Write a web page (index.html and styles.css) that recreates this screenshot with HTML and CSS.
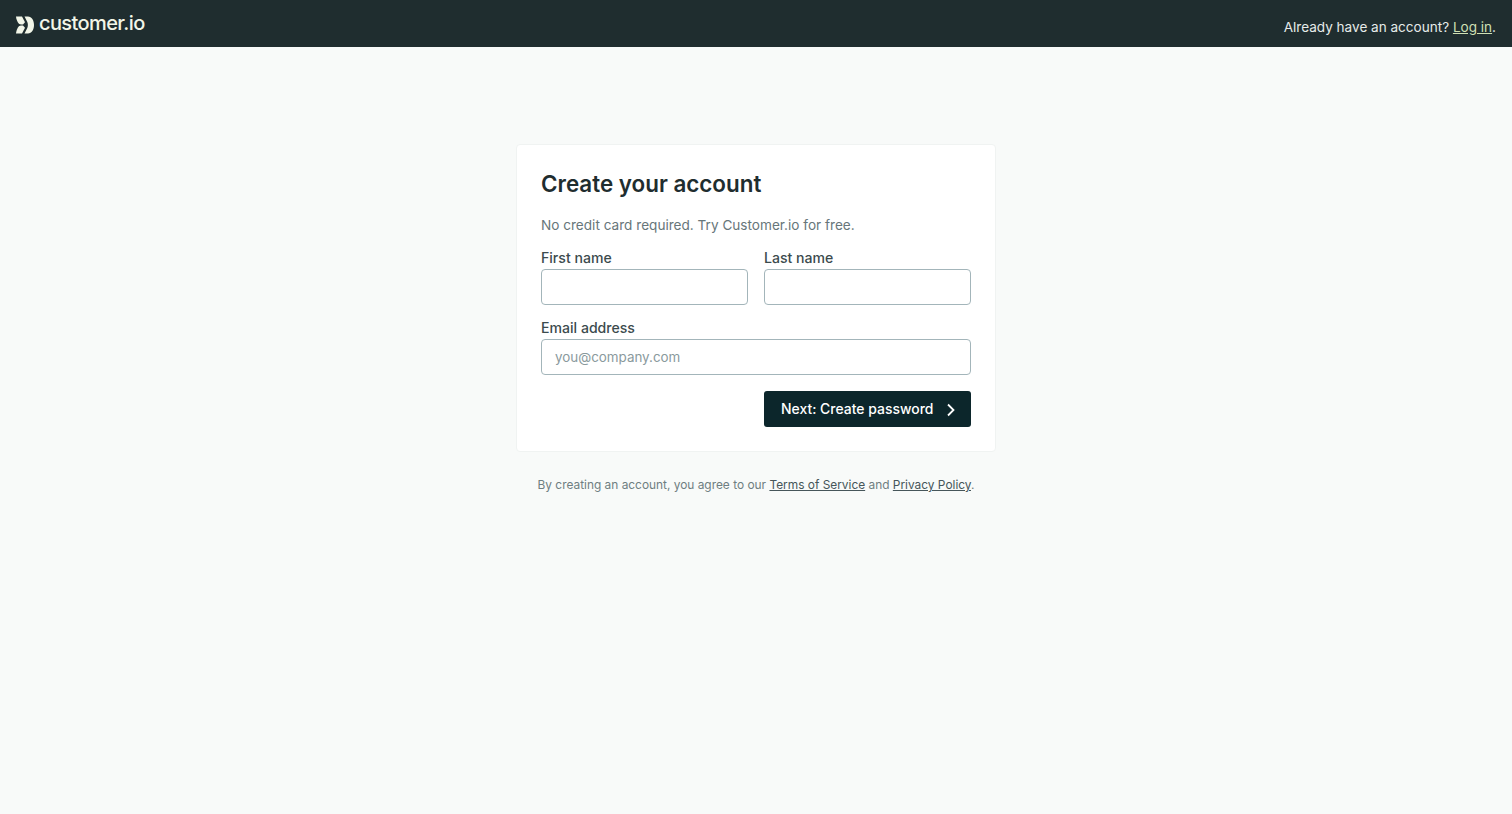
FILE: index.html
```html
<!DOCTYPE html>
<html lang="en">
<head>
  <meta charset="UTF-8">
  <meta name="viewport" content="width=device-width, initial-scale=1.0">
  <title>Create your account</title>
  <link rel="stylesheet" href="styles.css">
</head>
<body>

  <header class="topbar">
    <a class="logo" href="#">
      <svg class="logo-mark" viewBox="0 0 18 18" width="18" height="18" aria-hidden="true">
        <path d="M0 .5h6l3 5.800-2 2.200H5C2.500 8.500.6 5 0 .5z" fill="#f2f6e8"/>
        <path d="M0 17.500h6l3-5.800-2-2.200H5c-2.500 0-4.400 3.500-5 8z" fill="#f2f6e8"/>
        <path d="M8.500.5H12c3.700 0 6 3.800 6 8.500s-2.300 8.500-6 8.500H8.500l2.800-5.500c.8-1.900.8-4.100 0-6L8.500.5z" fill="#f2f6e8"/>
      </svg>
      <span class="logo-text">customer.io</span>
    </a>
    <p class="topbar-note">Already have an account? <a href="#">Log in</a>.</p>
  </header>

  <main class="page">
    <form class="card">
      <h1>Create your account</h1>
      <p class="intro">No credit card required. Try Customer.io for free.</p>

      <div class="name-row">
        <div class="field">
          <label for="firstName">First name</label>
          <input id="firstName" type="text">
        </div>
        <div class="field">
          <label for="lastName">Last name</label>
          <input id="lastName" type="text">
        </div>
      </div>

      <div class="field">
        <label for="email">Email address</label>
        <input id="email" type="email" placeholder="you@company.com">
      </div>

      <div class="actions">
        <button type="button" class="next-button">
          Next: Create password
          <svg viewBox="0 0 10 14" width="10" height="14" aria-hidden="true">
            <path d="M2 1.500 7.500 7 2 12.500" fill="none" stroke="currentColor" stroke-width="1.800"/>
          </svg>
        </button>
      </div>
    </form>

    <p class="terms">By creating an account, you agree to our <a href="#">Terms of Service</a> and <a href="#">Privacy Policy</a>.</p>
  </main>

</body>
</html>
```

FILE: styles.css
```css
* {
  margin: 0;
  padding: 0;
  box-sizing: border-box;
}

body {
  font-family: Inter, "Liberation Sans", sans-serif;
  background-color: #f8faf9;
  color: #1f2d2f;
  height: 100vh;
  overflow: hidden;
}

.topbar {
  height: 47px;
  background-color: #1f2d2f;
  display: flex;
  justify-content: space-between;
  padding: 0 16px;
}

.logo {
  display: flex;
  align-items: center;
  gap: 5px;
  height: 47px;
  text-decoration: none;
  color: #f2f6e8;
}

.logo-mark {
  margin-top: 2px;
}

.logo-text {
  font-size: 20px;
  font-weight: 500;
  letter-spacing: -0.6px;
  margin-bottom: 1px;
}

.topbar-note {
  font-size: 13.55px;
  line-height: 20px;
  padding-top: 17px;
  color: #e6ebe9;
}

.topbar-note a {
  color: #cfe0b4;
}

.page {
  display: flex;
  flex-direction: column;
  align-items: center;
  padding-top: 97px;
}

.card {
  width: 480px;
  height: 308px;
  padding: 24px;
  background-color: white;
  border: 1px solid #f0f3f2;
  border-radius: 4px;
}

h1 {
  font-size: 22.4px;
  font-weight: 600;
  line-height: 30px;
  color: #1f2d2f;
}

.intro {
  font-size: 13.6px;
  line-height: 20px;
  margin-top: 16px;
  color: #67767a;
}

.name-row {
  display: grid;
  grid-template-columns: 1fr 1fr;
  gap: 16px;
  margin-top: 13px;
  margin-bottom: 13px;
}

label {
  display: block;
  font-size: 14.1px;
  font-weight: 500;
  line-height: 20px;
  margin-bottom: 1px;
  color: #3c4b4e;
}

input {
  display: block;
  width: 100%;
  height: 36px;
  padding: 0 13px;
  font-family: inherit;
  font-size: 13.4px;
  background-color: white;
  border: 1.5px solid #a3b5ba;
  border-radius: 4px;
}

input::placeholder {
  color: #8a9a9d;
}

.actions {
  display: flex;
  justify-content: flex-end;
  margin-top: 16px;
}

.next-button {
  width: 207px;
  height: 36px;
  display: flex;
  align-items: center;
  justify-content: space-between;
  padding: 0 15px 1px 17px;
  font-family: inherit;
  font-size: 13.95px;
  font-weight: 500;
  color: white;
  background-color: #0c262b;
  border: none;
  border-radius: 3px;
  cursor: pointer;
}

.next-button svg {
  margin-top: 2px;
}

.terms {
  font-size: 11.9px;
  line-height: 18px;
  margin-top: 24px;
  color: #6f7e81;
}

.terms a {
  color: #46565a;
}
```
